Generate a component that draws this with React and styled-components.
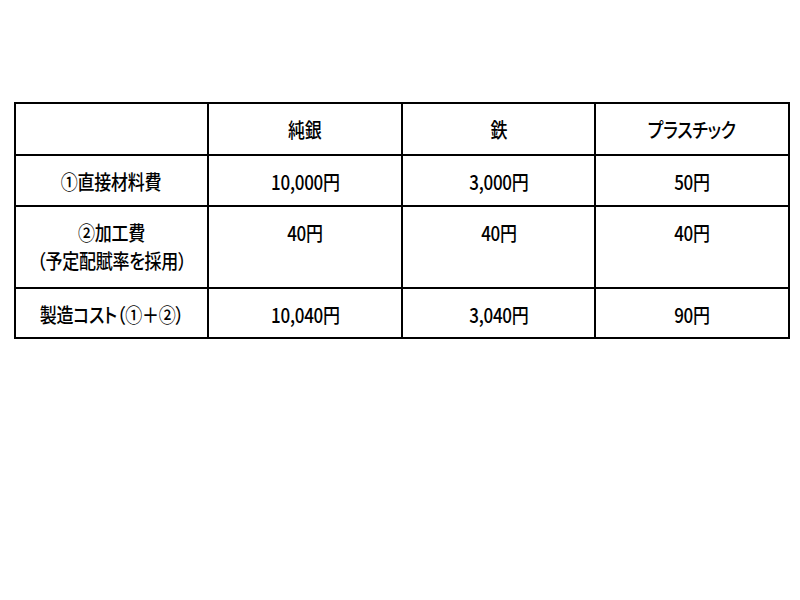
import styled, { createGlobalStyle } from "styled-components";

const GlobalStyle = createGlobalStyle`
  html, body {
    margin: 0;
    padding: 0;
    background: #ffffff;
  }
  body {
    font-family: "Noto Sans CJK JP", "Noto Sans", sans-serif;
    color: #000000;
  }
`;

const columns = ["純銀", "鉄", "プラスチック"];

const rows = [
  { label: ["①直接材料費"], values: ["10,000円", "3,000円", "50円"], height: 51 },
  {
    label: ["②加工費", "（予定配賦率を採用）"],
    values: ["40円", "40円", "40円"],
    height: 82,
  },
  { label: ["製造コスト（①＋②）"], values: ["10,040円", "3,040円", "90円"], height: 50 },
];

export default function App() {
  return (
    <>
      <GlobalStyle />
      <StyledPage>
        <StyledTable>
          <colgroup>
            <col width="193" />
            <col width="194" />
            <col width="193" />
            <col width="194" />
          </colgroup>
          <tbody>
            <StyledRow $height={52}>
              <StyledCell />
              {columns.map((column) => (
                <StyledCell key={column}>
                  <StyledText>{column}</StyledText>
                </StyledCell>
              ))}
            </StyledRow>
            {rows.map((row) => (
              <StyledRow key={row.label[0]} $height={row.height}>
                <StyledCell>
                  {row.label.map((line) => (
                    <StyledLine key={line}>
                      <StyledText>{line}</StyledText>
                    </StyledLine>
                  ))}
                </StyledCell>
                {row.values.map((value, index) => (
                  <StyledCell key={index}>
                    <StyledText>{value}</StyledText>
                  </StyledCell>
                ))}
              </StyledRow>
            ))}
          </tbody>
        </StyledTable>
      </StyledPage>
    </>
  );
}

const StyledPage = styled.main`
  width: 800px;
  height: 600px;
  padding: 102px 0 0 14px;
  box-sizing: border-box;
`;

const StyledTable = styled.table`
  width: 776px;
  border-collapse: collapse;
  table-layout: fixed;
  border: 2px solid #000;
`;

const StyledRow = styled.tr`
  height: ${({ $height }) => $height}px;
`;

const StyledCell = styled.td`
  border: 2px solid #000;
  padding: 12px 0 0;
  vertical-align: top;
  text-align: center;
  font-size: 20px;
  font-weight: 500;
  line-height: 28px;
  font-feature-settings: "palt";
  letter-spacing: -0.3px;
`;

const StyledLine = styled.div`
  white-space: nowrap;
`;

const StyledText = styled.span`
  display: inline-block;
  white-space: nowrap;
  transform: scaleX(0.85);
`;
